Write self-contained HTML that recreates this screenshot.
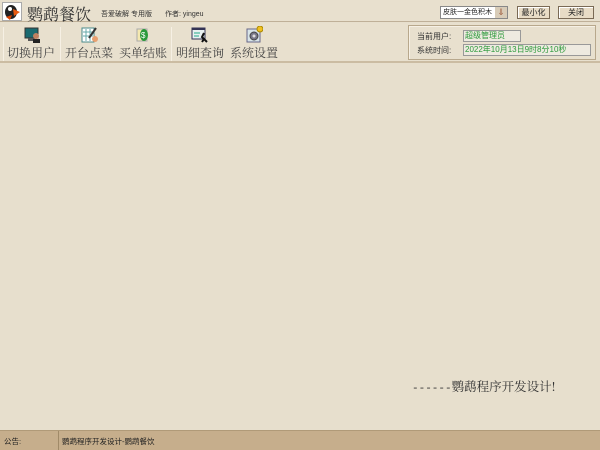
<!DOCTYPE html>
<html><head><meta charset="utf-8"><style>
*{margin:0;padding:0;box-sizing:border-box}
body{width:600px;height:450px;overflow:hidden;background:#e7dfcd;font-family:"Liberation Sans","Noto Sans CJK SC",sans-serif;position:relative;color:#222}
.abs{position:absolute}
.t{font-family:"Noto Serif CJK SC","Noto Sans CJK SC",serif}
.btn{position:absolute;top:6px;height:13px;border:1px solid #7a6a55;background:#e8dcc6;font-size:8px;line-height:11px;text-align:center;box-shadow:inset 1px 1px 0 #fff}
.tb{position:absolute;top:44px;font-size:12px;color:#444;white-space:nowrap}
.sep{position:absolute;top:27px;width:1px;height:34px;background:#cfc2ab;border-right:1px solid #f6f0e4}
.ic{position:absolute;top:26px;width:17px;height:17px}
</style></head><body>
<div class="abs" style="left:0;top:0;width:600px;height:22px;background:#e8e0ce;border-bottom:1px solid #bfb098"></div>
<div class="abs" style="left:2px;top:2px;width:20px;height:19px;background:#fff;border:1px solid #aaa">
<svg width="18" height="17"><ellipse cx="8" cy="9" rx="6" ry="7" fill="#222"/><circle cx="7" cy="6" r="2" fill="#fff"/><path d="M10 6 L17 9 L11 13Z" fill="#e85a10"/><path d="M3 14 L9 12 L7 17Z" fill="#d40"/></svg></div>
<div class="abs t" style="left:27px;top:2px;font-size:16px;color:#333">鹦鹉餐饮</div>
<div class="abs" style="left:101px;top:9px;font-size:7px;color:#333">吾爱破解 专用版</div>
<div class="abs" style="left:165px;top:9px;font-size:7px;color:#333">作者: yingeu</div>
<div class="abs" style="left:440px;top:6px;width:68px;height:13px;background:#fff;border:1px solid #888;font-size:7px;line-height:11px;padding-left:2px;overflow:hidden;white-space:nowrap">皮肤一金色积木<span style="position:absolute;right:0;top:0;width:12px;height:11px;background:#d8ccb8;color:#a06040;font-size:9px;line-height:11px;text-align:center">⇓</span></div>
<div class="btn" style="left:517px;width:33px">最小化</div>
<div class="btn" style="left:558px;width:36px">关闭</div>
<div class="abs" style="left:0;top:23px;width:600px;height:40px;background:#e8e0ce;border-bottom:2px solid #cbbca2"></div>
<div class="sep" style="left:3px"></div>
<div class="sep" style="left:60px"></div>
<div class="sep" style="left:171px"></div>
<div class="ic" style="left:24px"><svg width="17" height="17"><rect x="1" y="2" width="13" height="10" fill="#1a6a70" stroke="#333"/><rect x="4" y="12" width="7" height="3" fill="#555"/><circle cx="12" cy="10" r="3" fill="#c08060"/><rect x="9" y="13" width="7" height="4" fill="#222"/></svg></div>
<div class="ic" style="left:81px"><svg width="17" height="17"><rect x="1" y="2" width="12" height="14" fill="#fff" stroke="#4a8a8a"/><path d="M2 6H12M2 10H12M5 3V15M9 3V15" stroke="#6aa" /><path d="M8 12 L15 2" stroke="#333" stroke-width="2"/><circle cx="14" cy="13" r="3" fill="#e8a070"/></svg></div>
<div class="ic" style="left:135px"><svg width="17" height="17"><rect x="2" y="3" width="10" height="12" fill="#f4e8b0" stroke="#aaa"/><ellipse cx="9" cy="9" rx="4" ry="6" fill="#2a9a3a"/><text x="6" y="12" font-size="8" fill="#fff">$</text></svg></div>
<div class="ic" style="left:191px"><svg width="17" height="17"><rect x="1" y="2" width="13" height="11" fill="#e8f0f0" stroke="#335"/><rect x="1" y="2" width="13" height="2" fill="#335"/><path d="M3 7H9M3 10H8" stroke="#2a8" /><path d="M13 7 L11 11 L13 13 L11 16 M13 13 L16 16" stroke="#111" stroke-width="2" fill="none"/></svg></div>
<div class="ic" style="left:246px"><svg width="17" height="17"><rect x="1" y="3" width="13" height="13" fill="#d8e4e8" stroke="#668"/><circle cx="8" cy="10" r="4" fill="#778" stroke="#444"/><circle cx="8" cy="10" r="1.5" fill="#ddd"/><circle cx="14" cy="3" r="3" fill="#f0c020" stroke="#a80"/></svg></div>
<div class="tb t" style="left:7px">切换用户</div>
<div class="tb t" style="left:65px">开台点菜</div>
<div class="tb t" style="left:119px">买单结账</div>
<div class="tb t" style="left:176px">明细查询</div>
<div class="tb t" style="left:230px">系统设置</div>
<div class="abs" style="left:408px;top:25px;width:188px;height:35px;border:1px solid #b8a88c;box-shadow:inset 1px 1px 0 #f6f0e4"></div>
<div class="abs" style="left:417px;top:31px;font-size:8px;color:#333">当前用户:</div>
<div class="abs" style="left:417px;top:45px;font-size:8px;color:#333">系统时间:</div>
<div class="abs" style="left:463px;top:30px;width:58px;height:12px;background:#eeeae0;border:1px solid #999;font-size:8px;line-height:10px;color:#2a9a3a;padding-left:1px">超级管理员</div>
<div class="abs" style="left:463px;top:44px;width:128px;height:12px;background:#eeeae0;border:1px solid #999;font-size:8px;line-height:10px;color:#2a9a3a;padding-left:1px">2022年10月13日9时8分10秒</div>
<div class="abs t" style="left:412px;top:377px;font-size:12.5px;color:#333;white-space:nowrap"><span style="font-family:'Liberation Mono',monospace;font-size:11px">------</span>鹦鹉程序开发设计!</div>
<div class="abs" style="left:0;top:430px;width:600px;height:20px;background:#c6ae8c;border-top:1px solid #b09a78"></div>
<div class="abs" style="left:58px;top:431px;width:1px;height:19px;background:#a08a68"></div>
<div class="abs" style="left:4px;top:436px;font-size:7.5px;color:#222">公告:</div>
<div class="abs" style="left:62px;top:436px;font-size:7.5px;color:#222">鹦鹉程序开发设计-鹦鹉餐饮</div>
</body></html>
